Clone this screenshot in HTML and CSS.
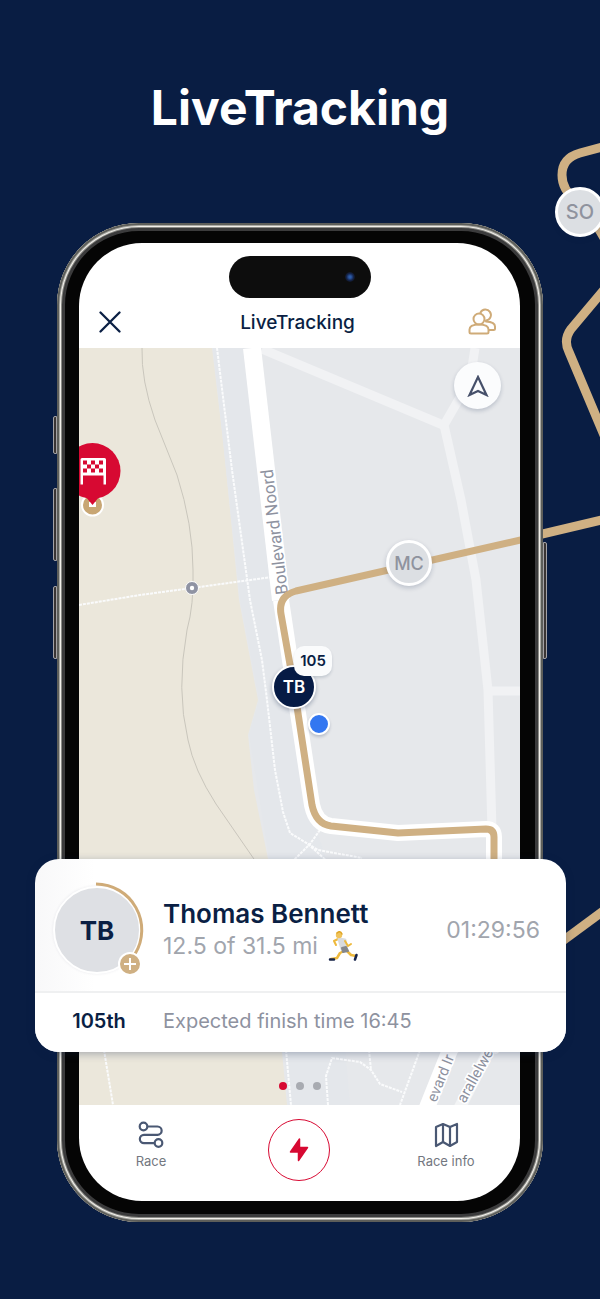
FILE: index.html
```html
<!DOCTYPE html>
<html lang="en">
<head>
    <meta charset="UTF-8">
    <meta name="viewport" content="width=device-width, initial-scale=1.0">
    <title>LiveTracking</title>
    <link rel="stylesheet" href="styles.css">
</head>
<body>
    <main class="promo">
        <!-- Route outside the phone -->
        <svg class="promo-route" viewBox="480 0 120 1299" aria-hidden="true">
            <path d="M610 145L580 153Q562 158 562 175Q562 190 576 200Q590 212 608 245"/>
            <path d="M608 285L571 329Q563 340 569 352L606 440"/>
            <path d="M500 544L610 518"/>
            <path d="M530 965L610 906"/>
        </svg>
        <div class="avatar promo-avatar">SO</div>

        <h1 class="promo-title">LiveTracking</h1>

        <div class="phone">
            <span class="phone-key key-action"></span>
            <span class="phone-key key-up"></span>
            <span class="phone-key key-down"></span>
            <span class="phone-key key-power"></span>

            <div class="screen">
                <div class="status-bar">
                    <div class="island"><span class="camera"></span></div>
                </div>

                <header class="app-header">
                    <button class="icon-button" aria-label="Close">
                        <svg width="22" height="22" viewBox="0 0 22 22"><path d="M1.5 1.5L20.5 20.5M20.5 1.5L1.5 20.5" fill="none" stroke="#0a1f44" stroke-width="2.300" stroke-linecap="round"/></svg>
                    </button>
                    <h2 class="app-title">LiveTracking</h2>
                    <button class="icon-button" aria-label="Friends">
                        <svg width="28" height="28" viewBox="0 0 28 28" fill="none" stroke="#cfab78" stroke-width="2" stroke-linejoin="round" stroke-linecap="round">
                            <circle cx="11" cy="11" r="5.500"/>
                            <path d="M12.500 4.500A5.500 5.500 0 1 1 18 12.500"/>
                            <path d="M1.500 24V21.500Q1.500 16.500 11 16.500Q20.500 16.500 20.500 21.500V24Q20.500 25.500 19 25.500H3Q1.500 25.500 1.500 24Z"/>
                            <path d="M18 13.500Q27 14 27 18.500V20.500Q27 22 25.500 22H21"/>
                        </svg>
                    </button>
                </header>

                <div class="map">
                    <svg class="map-tiles" viewBox="79 348 441 757" preserveAspectRatio="xMidYMin slice">
                        <rect x="79" y="348" width="441" height="757" fill="#e6e8eb"/>
                        <path d="M79 348H212L223 440L239 600L258 700L248 735L254 790L268 859L282 1052L287 1105H79Z" fill="#ebe7db"/>
                        <path d="M213 348H244L284 600L313 820L330 870L350 1105H288L269 859L249 735L259 700L240 600Z" fill="#e4e7eb"/>

                        <!-- Side roads -->
                        <g fill="none" stroke="#f1f2f4" stroke-width="9">
                            <path d="M262 349L443 425"/>
                            <path d="M475 348L470 380L444 425L461 500L476 580L488 690L492 830"/>
                            <path d="M488 691H520"/>
                        </g>

                        <!-- Footpaths -->
                        <g fill="none" stroke="#fafbfc" stroke-width="2" stroke-dasharray="3 1">
                            <path d="M217 348L232 470L250 600L262 660L267 700L275 770L283 812L290 833L318 850L362 858"/>
                            <path d="M79 605L140 595L192 588L272 577"/>
                            <path d="M320 830L310 844L292 862M308 844L328 862"/>
                            <path d="M104 1050L113 1105M286 1050L291 1105"/>
                            <path d="M328 1105L326 1076L332 1058L360 1062L371 1070L380 1084L402 1092M420 1050L400 1105M369 1050L371 1070"/>
                        </g>
                        <path d="M142 348Q141 380 155 420L177 475Q193 525 193 570Q194 605 187 630Q176 690 188 740Q194 770 216 804L256 862" fill="none" stroke="#c9c6bc"/>

                        <!-- Boulevard -->
                        <path d="M252 348L281 600" fill="none" stroke="#ffffff" stroke-width="18"/>
                        <path d="M281 600L294 687L312 805Q316 824 331 826L398 833L486 829Q494 829 494 837V870" fill="none" stroke="#ffffff" stroke-width="16" stroke-linejoin="round"/>
                        <path d="M424 1115L456 1035" fill="none" stroke="#ffffff" stroke-width="16"/>
                        <path d="M456 1115L497 1035" fill="none" stroke="#f3f4f5" stroke-width="12"/>

                        <g class="road-name">
                            <text transform="translate(288 594) rotate(-97)">Boulevard Noord</text>
                            <text class="small" transform="translate(436 1103) rotate(-68)">evard Ir d</text>
                            <text class="small" transform="translate(465 1104) rotate(-61)">arallelweg</text>
                        </g>

                        <path d="M525 539L296 591Q278 596 281 614L294 687L312 805Q316 824 331 826L398 833L486 829Q494 829 494 837V870" fill="none" stroke="#cfb083" stroke-width="7" stroke-linejoin="round"/>

                        <!-- Start and finish -->
                        <circle cx="192" cy="588" r="6.500" fill="#8f93a3" stroke="#ffffff"/>
                        <circle cx="192" cy="588" r="2.200" fill="#ffffff"/>
                        <circle cx="92.500" cy="505" r="10.500" fill="#c8a673" stroke="#ffffff" stroke-width="2"/>
                        <rect x="89" y="502" width="7" height="5" fill="#ffffff"/>
                        <path d="M86 497L92.500 505L99 497Z" fill="#d70932"/>
                        <circle cx="92.500" cy="471" r="28" fill="#d70932"/>
                        <g fill="#ffffff">
                            <path d="M82 458H104.500Q106 458 106 459.500V484.500H103.500V475.500H83V484.500H80.500V459.500Q80.500 458 82 458Z"/>
                            <path d="M83 460.500h4v4h-4zM91 460.500h4v4h-4zM99 460.500h4v4h-4zM87 464.500h4v4h-4zM95 464.500h4v4h-4zM83 468.500h4v4h-4zM91 468.500h4v4h-4zM99 468.500h4v4h-4z" fill="#d70932"/>
                        </g>
                    </svg>

                    <button class="locate-button" aria-label="My location">
                        <svg width="22" height="22" viewBox="0 0 22 22"><path d="M11 2L19.500 20L11 16L2.500 20Z" fill="none" stroke="#46506a" stroke-width="2.200" stroke-linejoin="miter"/></svg>
                    </button>
                    <div class="avatar pin-mc">MC</div>
                    <div class="pin-tb">TB</div>
                    <div class="pin-rank">105</div>
                    <div class="pin-me"></div>

                    <div class="pager">
                        <span class="pager-dot active"></span>
                        <span class="pager-dot"></span>
                        <span class="pager-dot"></span>
                    </div>
                </div>

                <nav class="tab-bar">
                    <a class="tab" href="#race">
                        <svg width="26" height="28" viewBox="0 0 26 28" fill="none" stroke="#4a5873" stroke-width="2.200">
                            <circle cx="5.500" cy="5.500" r="3.800"/>
                            <circle cx="20.500" cy="22" r="3.800"/>
                            <path d="M9.300 5.500H19.500A4.150 4.150 0 0 1 19.500 13.800H6A4.150 4.150 0 0 0 6 22.100H16.700"/>
                        </svg>
                        Race
                    </a>
                    <a class="tab-main" href="#live" aria-label="Live">
                        <svg width="20" height="24" viewBox="0 0 20 24"><path d="M10.500 1V9.500H18.500L9.500 22.500V14H1.500Z" fill="#d70932" stroke="#d70932" stroke-width="1.500" stroke-linejoin="round"/></svg>
                    </a>
                    <a class="tab" href="#info">
                        <svg width="26" height="28" viewBox="0 0 26 28" fill="none" stroke="#4a5873" stroke-width="2.200" stroke-linejoin="round">
                            <path d="M3 6L10 3L17 6L24 3V21L17 25L10 21L3 25Z"/>
                            <path d="M10 3V21M17 6V25"/>
                        </svg>
                        Race info
                    </a>
                </nav>
            </div>

            <section class="runner-card">
                <div class="runner-main">
                    <div class="runner-avatar">
                        TB
                        <svg class="progress" viewBox="0 0 100 100" aria-hidden="true">
                            <path d="M49 4A46 46 0 0 1 88 74" fill="none" stroke="#cfab78" stroke-width="3"/>
                            <circle cx="83" cy="84" r="11" fill="#cfb083" stroke="#ffffff" stroke-width="2"/>
                            <path d="M77 84H89M83 78V90" stroke="#ffffff" stroke-width="2"/>
                        </svg>
                    </div>
                    <div class="runner-info">
                        <h3 class="runner-name">Thomas Bennett</h3>
                        <p class="runner-distance">
                            12.5 of 31.5 mi
                            <svg width="30" height="30" viewBox="0 0 30 30" fill="none" stroke-linecap="round" stroke-linejoin="round" aria-hidden="true">
                                <path d="M10 8L6 10L8 14" stroke="#eeb93c" stroke-width="2"/>
                                <path d="M16 20L12 22L9 27L3 28" stroke="#eeb93c" stroke-width="2.500"/>
                                <path d="M19 20L23 24L28 25" stroke="#eeb93c" stroke-width="2.500"/>
                                <path d="M2 28.500H6M28.500 24L27 28.500" stroke="#17244b" stroke-width="2.500"/>
                                <path d="M11 8L17 9L18 17L14 18Z" fill="#d9dbdd" stroke="#d9dbdd" stroke-width="3"/>
                                <path d="M17 10L20 15L23 13" stroke="#eeb93c" stroke-width="2"/>
                                <path d="M14 17L18 16L20 20L15 21Z" fill="#85878b" stroke="#85878b" stroke-width="2"/>
                                <circle cx="11" cy="4" r="3.200" fill="#f0c35a"/>
                                <path d="M9 2Q12 -1 14 3" stroke="#dfa526" stroke-width="1.500"/>
                            </svg>
                        </p>
                    </div>
                    <time class="runner-time">01:29:56</time>
                </div>
                <div class="runner-extra">
                    <strong class="runner-rank">105th</strong>
                    <p class="runner-finish">Expected finish time 16:45</p>
                </div>
            </section>
        </div>
    </main>
</body>
</html>
```
FILE: styles.css
```css
* {
    margin: 0;
    padding: 0;
    box-sizing: border-box;
}

body {
    font-family: Inter, "Liberation Sans", sans-serif;
    background: #091d43;
    color: #0a1f44;
    min-height: 100vh;
}

button {
    border: none;
    background: none;
    cursor: pointer;
    font: inherit;
}

a {
    color: inherit;
    text-decoration: none;
}

.promo {
    position: relative;
    display: flex;
    flex-direction: column;
    align-items: center;
    padding: 76px 0 76px;
    overflow: hidden;
}

.promo-title {
    font-size: 48px;
    font-weight: 700;
    line-height: 64px;
    color: #ffffff;
    margin-bottom: 83px;
}

.promo-route {
    position: absolute;
    top: 0;
    right: 0;
    width: 120px;
    height: 1299px;
    fill: none;
    stroke: #cfb083;
    stroke-width: 9;
}

.avatar {
    position: absolute;
    display: flex;
    align-items: center;
    justify-content: center;
    width: 46px;
    height: 46px;
    border: 3px solid #ffffff;
    border-radius: 50%;
    background: #dcdfe3;
    color: #8f939e;
    font-size: 18px;
    font-weight: 500;
    box-shadow: 0 2px 5px rgba(10, 31, 68, 0.2);
}

.promo-avatar {
    top: 187px;
    right: -5px;
    width: 50px;
    height: 50px;
    font-size: 20px;
}

/* Phone */
.phone {
    position: relative;
    width: 81%;
    padding: 20px 23px 21px 22px;
    border-radius: 82px;
    background: #050505;
    box-shadow: inset 0 0 0 2px #5d5e5a, inset 0 0 0 3px #aaaaa4, inset 0 0 0 4px #f1efea, inset 0 0 0 5px #8a8a86, inset 0 0 0 8px #3b3b3c;
}

.phone-key {
    position: absolute;
    left: -4px;
    width: 4px;
    border: 1px solid #a5a3a6;
    background: #3a3534;
    border-radius: 2px 0 0 2px;
}

.key-action {
    top: 193px;
    height: 38px;
}

.key-up {
    top: 265px;
    height: 73px;
}

.key-down {
    top: 363px;
    height: 73px;
}

.key-power {
    top: 319px;
    left: auto;
    right: -4px;
    height: 117px;
    border-radius: 0 2px 2px 0;
}

.screen {
    background: #ffffff;
    border-radius: 63px;
    overflow: hidden;
}

.status-bar {
    display: flex;
    justify-content: center;
    padding-top: 13px;
}

.island {
    display: flex;
    align-items: center;
    justify-content: flex-end;
    width: 142px;
    height: 42px;
    padding-right: 16px;
    border-radius: 21px;
    background: #0d0d0d;
}

.camera {
    width: 10px;
    height: 10px;
    border-radius: 50%;
    background: radial-gradient(circle, #2c5ba8 15%, #14234a 50%, #101318 75%);
}

.app-header {
    display: grid;
    grid-template-columns: 28px 1fr 28px;
    align-items: center;
    height: 50px;
    padding: 0 24px 2px 20px;
}

.icon-button {
    display: flex;
    align-items: center;
}

.app-title {
    font-size: 19px;
    font-weight: 500;
    text-align: center;
}

/* Map */
.map {
    position: relative;
    aspect-ratio: 441 / 757;
    overflow: hidden;
}

.map-tiles {
    display: block;
    width: 100%;
    height: 100%;
}

.road-name {
    fill: #8e929f;
    stroke: #ffffff;
    stroke-width: 3px;
    paint-order: stroke;
    font-family: Roboto, sans-serif;
    font-size: 17px;
}

.road-name .small {
    font-size: 15px;
}

.locate-button {
    position: absolute;
    top: 14px;
    right: 19px;
    display: flex;
    align-items: center;
    justify-content: center;
    width: 47px;
    height: 47px;
    border-radius: 50%;
    background: #fbfcfd;
    box-shadow: 0 2px 4px rgba(10, 31, 68, 0.2);
}

.pin-mc {
    top: 192px;
    left: 307px;
}

.pin-tb {
    position: absolute;
    top: 317px;
    left: 193px;
    display: flex;
    align-items: center;
    justify-content: center;
    width: 44px;
    height: 44px;
    border: 2px solid #ffffff;
    border-radius: 50%;
    background: #061b45;
    color: #ffffff;
    font-size: 17px;
    font-weight: 600;
    box-shadow: 0 2px 4px rgba(10, 31, 68, 0.3);
}

.pin-rank {
    position: absolute;
    top: 298px;
    left: 215px;
    width: 38px;
    border-radius: 10px;
    background: #fafbfc;
    font-size: 15px;
    font-weight: 600;
    line-height: 30px;
    text-align: center;
    box-shadow: 0 2px 3px rgba(10, 31, 68, 0.15);
}

.pin-me {
    position: absolute;
    top: 365px;
    left: 229px;
    width: 22px;
    height: 22px;
    border: 2px solid #ffffff;
    border-radius: 50%;
    background: #3377f1;
    box-shadow: 0 2px 3px rgba(10, 31, 68, 0.2);
}

.pager {
    position: absolute;
    bottom: 15px;
    left: 0;
    right: 0;
    display: flex;
    justify-content: center;
    gap: 9px;
}

.pager-dot {
    width: 8px;
    height: 8px;
    border-radius: 50%;
    background: #a8abb1;
}

.pager-dot.active {
    background: #d70932;
}

/* Tabs */
.tab-bar {
    display: flex;
    justify-content: space-between;
    height: 96px;
    padding: 14px 42px 0 40px;
}

.tab {
    display: flex;
    flex-direction: column;
    align-items: center;
    gap: 4px;
    width: 64px;
    padding-top: 2px;
    font-size: 13px;
    line-height: 16px;
    color: #737780;
}

.tab-main {
    display: flex;
    align-items: center;
    justify-content: center;
    width: 62px;
    height: 62px;
    border: 1px solid #d70932;
    border-radius: 50%;
}

/* Runner card */
.runner-card {
    position: absolute;
    top: 636px;
    left: -22px;
    right: -23px;
    border-radius: 24px;
    background: linear-gradient(90deg, #f8f8f9 0, #ffffff 60px);
    box-shadow: 0 2px 8px rgba(10, 31, 68, 0.3);
}

.runner-main,
.runner-extra {
    display: grid;
    grid-template-columns: 128px 1fr auto;
    align-items: center;
    padding-right: 26px;
}

.runner-main {
    height: 134px;
    padding-top: 10px;
    border-bottom: 2px solid #eff0f1;
}

.runner-avatar {
    position: relative;
    justify-self: center;
    display: flex;
    align-items: center;
    justify-content: center;
    width: 88px;
    height: 88px;
    margin-right: 4px;
    border: 2px solid #ffffff;
    border-radius: 50%;
    background: #dee0e4;
    font-size: 26px;
    font-weight: 700;
    box-shadow: 0 0 3px rgba(10, 31, 68, 0.08);
}

.progress {
    position: absolute;
    top: -8px;
    left: -8px;
    width: 100px;
    height: 100px;
}

.runner-name {
    font-size: 26px;
    font-weight: 600;
    line-height: 32px;
}

.runner-distance {
    display: flex;
    align-items: center;
    gap: 10px;
    font-size: 23px;
    line-height: 32px;
    color: #a1a5ad;
}

.runner-time {
    font-size: 23px;
    color: #a1a5ad;
}

.runner-extra {
    height: 59px;
    padding-bottom: 4px;
    font-size: 20px;
    border-radius: 0 0 24px 24px;
    background: #ffffff;
}

.runner-rank {
    text-align: center;
    font-weight: 600;
}

.runner-finish {
    color: #8e929f;
}
```
